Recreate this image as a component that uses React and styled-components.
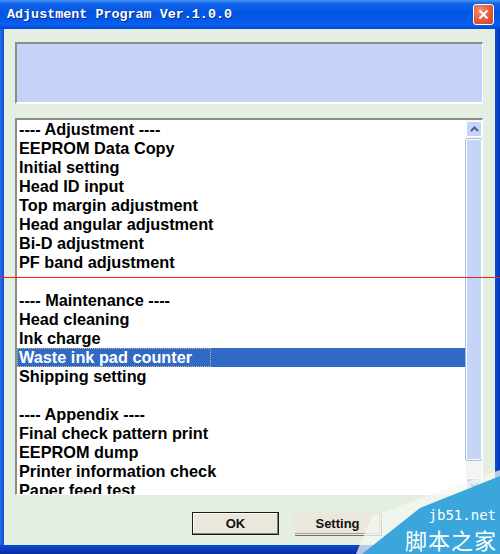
import React from 'react';
import styled, { createGlobalStyle } from 'styled-components';

const GlobalStyle = createGlobalStyle`
  html, body {
    margin: 0;
    padding: 0;
    overflow: hidden;
    background: #ffffff;
  }
`;

const Window = styled.div`
  position: relative;
  width: 500px;
  height: 554px;
  display: flex;
  flex-direction: column;
  overflow: hidden;
  font-family: "Liberation Sans", Arial, sans-serif;
`;

const TitleBar = styled.div`
  height: 29px;
  flex: none;
  display: flex;
  align-items: center;
  justify-content: space-between;
  padding: 0 6px 0 7px;
  box-sizing: border-box;
  background: linear-gradient(180deg, #4a95f8 0%, #1266ea 12%, #0054e3 45%, #0a5ef0 85%, #0048cf 100%);
`;

const TitleText = styled.span`
  font-family: "Liberation Mono", "Courier New", monospace;
  font-weight: bold;
  font-size: 13.4px;
  color: #ffffff;
  text-shadow: 1px 1px 0 #0a2a88;
`;

const CloseButton = styled.div`
  width: 21px;
  height: 21px;
  box-sizing: border-box;
  border: 1px solid #ffffff;
  border-radius: 3px;
  background: radial-gradient(circle at 35% 30%, #f4927a 0%, #e25a3a 55%, #c8401e 100%);
  display: flex;
  align-items: center;
  justify-content: center;
`;

const Frame = styled.div`
  flex: 1;
  display: flex;
  padding: 0 5px 9px 4px;
  background: linear-gradient(90deg, #2a6ee8 0px, #0a4fd8 4px, #0a4fd8 495px, #0036b8 500px);
  position: relative;

  &::after {
    content: '';
    position: absolute;
    left: 0;
    right: 0;
    bottom: 0;
    height: 9px;
    background: linear-gradient(180deg, #0a4ad8 0%, #0a2f9e 100%);
  }
`;

const Body = styled.div`
  flex: 1;
  display: flex;
  flex-direction: column;
  background: #e4eee1;
  padding: 13px 12px 10px 11px;
`;

const MessageBox = styled.div`
  height: 62px;
  box-sizing: border-box;
  background: #c6d3f8;
  border-top: 2px solid #8c8c88;
  border-left: 2px solid #8c8c88;
  border-right: 1px solid #ffffff;
  border-bottom: 2px solid #ffffff;
`;

const ListBox = styled.div`
  margin-top: 14px;
  height: 377px;
  box-sizing: border-box;
  display: flex;
  background: #ffffff;
  border-top: 2px solid #8c8c88;
  border-left: 2px solid #8c8c88;
  border-right: 1px solid #ffffff;
  border-bottom: 1px solid #ffffff;
  overflow: hidden;
`;

const Items = styled.div`
  flex: 1;
  overflow: hidden;
`;

const Item = styled.div`
  height: 19px;
  line-height: 19px;
  padding-left: 2px;
  font-size: 16.3px;
  font-weight: bold;
  color: ${p => (p.$selected ? '#ffffff' : '#000000')};
  background: ${p => (p.$selected ? '#316ac5' : 'transparent')};
  white-space: nowrap;
`;

const FocusRect = styled.span`
  display: inline-block;
  height: 19px;
  box-sizing: border-box;
  margin-left: -2px;
  padding: 0 18px 0 1px;
  border: 1px dotted #c9b98a;
  line-height: 17px;
`;

const ScrollBar = styled.div`
  width: 16px;
  flex: none;
  display: flex;
  flex-direction: column;
  gap: 2px;
  padding: 1px 0 0;
  background: #f4f4f0;
`;

const ArrowButton = styled.div`
  height: 16px;
  flex: none;
  box-sizing: border-box;
  border: 1px solid #ffffff;
  border-radius: 2px;
  background: #c3d3fb;
  display: flex;
  align-items: center;
  justify-content: center;
`;

const Thumb = styled.div`
  height: 321px;
  flex: none;
  box-sizing: border-box;
  border: 1px solid #ffffff;
  outline: 1px solid #a9b9e0;
  border-radius: 2px;
  background: #c6d4f8;
`;

const Track = styled.div`
  flex: 1;
`;

const ButtonRow = styled.div`
  display: flex;
  gap: 15px;
  margin-top: 17px;
  padding-left: 177px;
`;

const Button = styled.div`
  width: 87px;
  height: 23px;
  box-sizing: border-box;
  display: flex;
  align-items: center;
  justify-content: center;
  background: #ebe7da;
  font-size: 13px;
  font-weight: bold;
  color: #111111;
  border: 1px solid ${p => (p.$default ? '#1a1a1a' : '#e8e8e8')};
  box-shadow: ${p => (p.$default
    ? 'inset -1px -1px 0 #808080, inset 1px 1px 0 #ffffff'
    : '1px 1px 0 #6f6f6f, inset -1px -1px 0 #a0a0a0')};
`;

const RedLine = styled.div`
  position: absolute;
  left: 0;
  right: 0;
  top: 277px;
  height: 1px;
  background: #ff1a1a;
`;

const Watermark = styled.div`
  position: absolute;
  right: 0;
  bottom: 0;
  width: 150px;
  height: 100px;
  pointer-events: none;
`;

const WatermarkShape = styled.svg`
  position: absolute;
  inset: 0;
`;

const WatermarkUrl = styled.span`
  position: absolute;
  right: 4px;
  bottom: 31px;
  font-family: "DejaVu Sans Mono", monospace;
  font-size: 14px;
  color: #ffffff;
`;

const WatermarkName = styled.span`
  position: absolute;
  right: 3px;
  bottom: 1px;
  font-family: "Noto Sans CJK SC", sans-serif;
  font-size: 22px;
  line-height: 28px;
  color: #ffffff;
  letter-spacing: 1px;
`;

const items = [
  '---- Adjustment ----',
  'EEPROM Data Copy',
  'Initial setting',
  'Head ID input',
  'Top margin adjustment',
  'Head angular adjustment',
  'Bi-D adjustment',
  'PF band adjustment',
  '',
  '---- Maintenance ----',
  'Head cleaning',
  'Ink charge',
  'Waste ink pad counter',
  'Shipping setting',
  '',
  '---- Appendix ----',
  'Final check pattern print',
  'EEPROM dump',
  'Printer information check',
  'Paper feed test',
];

const Chevron = ({ down }) => (
  <svg width="9" height="6" viewBox="0 0 9 6">
    <path
      d={down ? 'M1 1 L4.5 4.5 L8 1' : 'M1 5 L4.5 1.5 L8 5'}
      fill="none"
      stroke="#4d6185"
      strokeWidth="2"
    />
  </svg>
);

const App = () => {
  const selected = 'Waste ink pad counter';

  return (
    <Window>
      <GlobalStyle />
      <TitleBar>
        <TitleText>Adjustment Program Ver.1.0.0</TitleText>
        <CloseButton>
          <svg width="11" height="11" viewBox="0 0 11 11">
            <path d="M1.5 1.5 L9.5 9.5 M9.5 1.5 L1.5 9.5" stroke="#ffffff" strokeWidth="2" />
          </svg>
        </CloseButton>
      </TitleBar>
      <Frame>
        <Body>
          <MessageBox />
          <ListBox>
            <Items>
              {items.map((label, i) => (
                <Item key={i} $selected={label === selected}>
                  {label === selected ? <FocusRect>{label}</FocusRect> : label || '\u00a0'}
                </Item>
              ))}
            </Items>
            <ScrollBar>
              <ArrowButton>
                <Chevron />
              </ArrowButton>
              <Thumb />
              <Track />
              <ArrowButton>
                <Chevron down />
              </ArrowButton>
            </ScrollBar>
          </ListBox>
          <ButtonRow>
            <Button $default>OK</Button>
            <Button>Setting</Button>
          </ButtonRow>
        </Body>
      </Frame>
      <RedLine />
      <Watermark>
        <WatermarkShape width="150" height="100" viewBox="0 0 150 100">
          <polygon points="6,100 22,62 150,16 150,100" fill="#f4f8f2" opacity="0.75" />
          <polygon points="12,100 70,54 150,22 150,100" fill="#3aa6dc" />
        </WatermarkShape>
        <WatermarkUrl>jb51.net</WatermarkUrl>
        <WatermarkName>脚本之家</WatermarkName>
      </Watermark>
    </Window>
  );
};

export default App;
